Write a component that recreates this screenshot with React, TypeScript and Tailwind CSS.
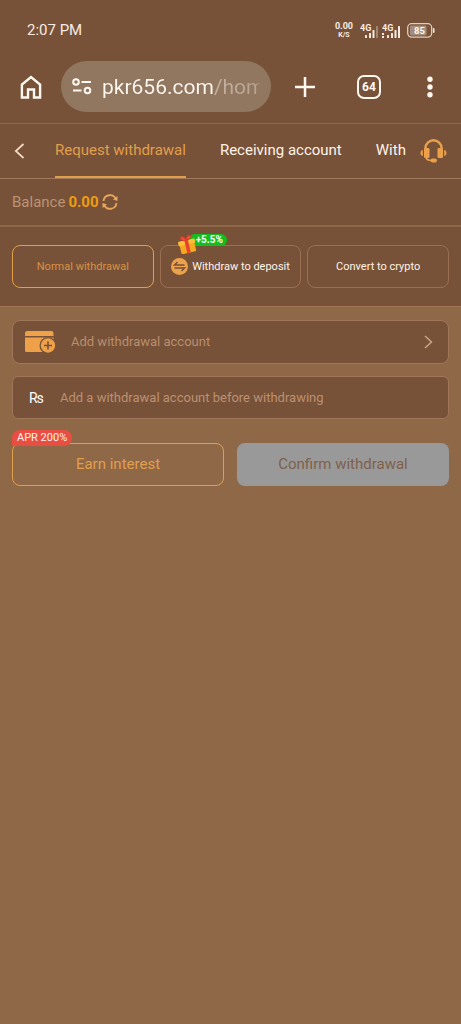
import React, { useState } from 'react';
import clsx from 'clsx';

const tabs = ['Request withdrawal', 'Receiving account', 'Withdrawal records'];

const SignalIcon: React.FC<{ roaming?: boolean }> = ({ roaming }) => (
  <svg width="19" height="16" viewBox="0 0 19 16" fill="#f7ebe1" aria-hidden="true">
    <text x="0" y="8" fontSize="9" fontWeight="700" fontFamily="Roboto, sans-serif">
      4G
    </text>
    {roaming && <path d="M0 10h2v2H0zM0 13h2v2H0z" />}
    <rect x="5" y="12" width="2" height="3" rx="0.5" />
    <rect x="9" y="10" width="2" height="5" rx="0.5" />
    <rect x="12.5" y="7" width="2" height="8" rx="0.5" />
    <rect x="16" y="3" width="2" height="12" rx="0.5" opacity={roaming ? 1 : 0.35} />
  </svg>
);

const StatusBar: React.FC = () => (
  <div className="flex h-[61px] items-center pl-[27px] pr-[26px] text-[#f7ebe1]">
    <span className="flex-1 text-[15px]">2:07 PM</span>
    <div className="flex items-center">
      <div className="mr-[7px] flex flex-col items-center font-bold">
        <span className="text-[9px] leading-[9px]">0.00</span>
        <span className="text-[7px] leading-[8px]">K/S</span>
      </div>
      <SignalIcon />
      <span className="w-[3px]" />
      <SignalIcon roaming />
      <svg className="ml-[6px]" width="28" height="15" viewBox="0 0 28 15" aria-hidden="true">
        <rect x="3" y="2.5" width="16.5" height="10" rx="1.5" fill="#a58d7c" />
        <rect x="0.7" y="0.7" width="24" height="13.4" rx="4" fill="none" stroke="#e2cdbd" strokeWidth="1.3" />
        <rect x="26" y="5" width="1.5" height="5" rx="0.7" fill="#f7ebe1" />
        <text
          x="12.5"
          y="11"
          fontSize="9.5"
          fontWeight="700"
          fontFamily="Roboto, sans-serif"
          textAnchor="middle"
          fill="#fff6ee"
        >
          85
        </text>
      </svg>
    </div>
  </div>
);

const BrowserBar: React.FC = () => {
  const [url, setUrl] = useState('pkr656.com/home');

  return (
    <div className="flex h-[63px] items-start border-b border-[#8e6a50] pl-5 pr-5 text-[#fff8f1]">
      <button type="button" aria-label="Home" className="flex h-[51px] w-[22px] items-center justify-center">
        <svg width="22" height="24" viewBox="0 0 22 24" fill="none" stroke="currentColor" strokeWidth="2.4">
          <path d="M1.900 22.500V9.500L11 2l9.100 7.500v13H14v-8H8v8z" />
        </svg>
      </button>

      {/* Address bar */}
      <div className="ml-[19px] flex h-[51px] min-w-0 flex-1 items-center rounded-full bg-[#917660] pl-[11px] pr-[10px]">
        <svg className="shrink-0" width="20" height="17" viewBox="0 0 20 17" fill="none" stroke="currentColor" strokeWidth="2" aria-hidden="true">
          <circle cx="4" cy="4" r="2.8" />
          <path d="M9.500 4H19" />
          <path d="M1 12.500h8.500" />
          <circle cx="15.5" cy="12.500" r="2.8" />
        </svg>
        <input
          type="text"
          aria-label="Address"
          value={url}
          onChange={(e) => setUrl(e.target.value)}
          className="ml-[10px] w-full min-w-0 bg-linear-[90deg,#fff8f1_112px,#c5b2a3_112px,#b8a391_154px,#917660] bg-clip-text text-[21px] leading-7 text-transparent caret-white outline-none"
        />
      </div>

      <button type="button" aria-label="New tab" className="ml-[23px] flex h-[51px] w-[22px] items-center justify-center">
        <svg width="22" height="22" viewBox="0 0 22 22" stroke="currentColor" strokeWidth="2.5">
          <path d="M1 11h20M11 1v20" />
        </svg>
      </button>
      <button type="button" aria-label="Open tabs" className="ml-[41px] flex h-[51px] w-6 items-center justify-center">
        <span className="flex h-6 w-6 items-center justify-center rounded-[7px] border-2 border-current text-xs font-bold">
          64
        </span>
      </button>
      <button type="button" aria-label="Menu" className="ml-[38px] flex h-[51px] w-[22px] items-center justify-center">
        <svg width="6" height="22" viewBox="0 0 6 22" fill="currentColor">
          <circle cx="3" cy="3.2" r="2.7" />
          <circle cx="3" cy="11" r="2.7" />
          <circle cx="3" cy="18.8" r="2.7" />
        </svg>
      </button>
    </div>
  );
};

const HeadsetIcon: React.FC = () => (
  <svg width="27" height="24" viewBox="0 0 27 24" fill="none" aria-hidden="true">
    <path d="M5.500 10V9a8 7.700 0 0 1 16 0v1" stroke="#eba04a" strokeWidth="2.4" />
    <rect x="4" y="9" width="5.5" height="10" rx="1.2" fill="#eba04a" />
    <rect x="17.5" y="9" width="5.5" height="10" rx="1.2" fill="#eba04a" />
    <path d="M2.800 11v6C1.200 16.800 .5 15.600 .5 14s.7-2.800 2.300-3zM24.200 11v6c1.600-.2 2.300-1.400 2.300-3s-.7-2.800-2.300-3z" fill="#eba04a" />
    <path d="M6 18.500c.5 2.300 2.500 3 5.500 3" stroke="#eba04a" strokeWidth="1.5" />
    <rect x="10.5" y="19.5" width="6.5" height="4" rx="2" fill="#eba04a" />
  </svg>
);

const GiftIcon: React.FC = () => (
  <svg width="20" height="20" viewBox="0 0 20 20" aria-hidden="true">
    <g transform="rotate(-13 10 10)">
      <rect x="2.5" y="9" width="15" height="10" rx="1" fill="#f7a823" />
      <rect x="1.5" y="6" width="17" height="4.5" rx="1" fill="#ffbd3b" />
      <rect x="8.2" y="6" width="3.6" height="13" fill="#e3452f" />
      <path d="M10 6C7 6 4.500 5 5 3s3.800-1.500 5 3zM10 6c3 0 5.500-1 5-3s-3.800-1.500-5 3z" fill="#f0533a" stroke="#dd3b28" strokeWidth="1" />
    </g>
  </svg>
);

const CardPlusIcon: React.FC = () => (
  <svg width="31" height="22" viewBox="0 0 31 22" aria-hidden="true">
    <path d="M0 5V2.500A2.300 2.300 0 0 1 2.300 0h24A2.300 2.300 0 0 1 28.500 2.500V5z" fill="#eea148" />
    <path d="M0 6.500h28.500v13a1.500 1.500 0 0 1-1.500 1.500H1.500A1.500 1.500 0 0 1 0 19.500z" fill="#eea148" />
    <circle cx="23" cy="14.5" r="8.5" fill="#775238" />
    <circle cx="23" cy="14.5" r="7.2" fill="#eea148" />
    <path d="M19 14.500h8M23 10.500v8" stroke="#775238" strokeWidth="1.6" />
  </svg>
);

const App: React.FC = () => {
  const [activeTab, setActiveTab] = useState(tabs[0]);
  const [amount, setAmount] = useState('');

  return (
    <div className="min-h-screen bg-[#8f6848] font-[Roboto,sans-serif]">
      <header className="bg-[#775238]">
        <StatusBar />
        <BrowserBar />

        {/* Tabs */}
        <div className="flex h-[55px] items-stretch border-b border-[#a17a5e] px-[14px]">
          <button type="button" aria-label="Back" className="flex w-[11px] items-center">
            <svg width="11" height="16" viewBox="0 0 11 16" fill="none" stroke="#f1d9c5" strokeWidth="1.7">
              <path d="M9.500 1L1.800 8l7.700 7" />
            </svg>
          </button>
          <nav className="ml-[30px] flex min-w-0 flex-1 gap-[34px] overflow-hidden">
            {tabs.map((tab) => (
              <button
                key={tab}
                type="button"
                onClick={() => setActiveTab(tab)}
                className={clsx(
                  'shrink-0 whitespace-nowrap border-b-2 text-[15px]',
                  activeTab === tab ? 'border-[#e29f4b] text-[#e29f4b]' : 'border-transparent text-[#fff3e8]'
                )}
              >
                {tab}
              </button>
            ))}
          </nav>
          <button type="button" aria-label="Support" className="ml-[14px] flex items-center">
            <HeadsetIcon />
          </button>
        </div>

        {/* Balance */}
        <div className="flex h-12 items-center border-b-2 border-[#8f6848] px-3 text-[15px] text-[#bc9274]">
          <span>Balance</span>
          <span className="ml-[3px] font-bold text-[#f09c12]">0.00</span>
          <button type="button" aria-label="Refresh balance" className="ml-[3px]">
            <svg width="16" height="16" viewBox="0 0 16 16" fill="none" stroke="#e9a65c" strokeWidth="1.8">
              <path d="M1.500 7A6.500 6.500 0 0 1 14 5.300M14.500 9A6.500 6.500 0 0 1 2 10.700" />
              <path d="M15.500 2v5l-4.500-1.500zM.5 14V9L5 10.500z" fill="#e9a65c" stroke="none" />
            </svg>
          </button>
        </div>

        {/* Withdrawal type */}
        <div className="grid grid-cols-3 gap-[6px] border-b border-[#a17553] px-3 py-[18px] text-[11px] leading-4">
          <button type="button" className="h-[43px] rounded-lg border border-[#e29f4b] text-[#d89145]">
            Normal withdrawal
          </button>
          <button
            type="button"
            className="relative flex h-[43px] items-center justify-center gap-1 rounded-lg border border-[#9a6f52] text-[#fff3e8]"
          >
            <svg width="17" height="17" viewBox="0 0 17 17" className="shrink-0" aria-hidden="true">
              <circle cx="8.5" cy="8.5" r="8.5" fill="#eca24c" />
              <path d="M13.500 7H3.500L6.500 4M3.500 10h10l-3 3" fill="none" stroke="#775238" strokeWidth="1.5" />
            </svg>
            <span className="whitespace-nowrap">Withdraw to deposit</span>
            <span className="absolute -top-3 left-7 flex h-3 items-center rounded-full rounded-bl-none bg-[#14bd1b] pl-[7px] pr-1 text-[10px] font-bold leading-3 text-white">
              +5.5%
            </span>
            <span className="absolute -top-3 left-4">
              <GiftIcon />
            </span>
          </button>
          <button type="button" className="h-[43px] rounded-lg border border-[#9a6f52] text-[#fff3e8]">
            Convert to crypto
          </button>
        </div>
      </header>

      <main className="px-3 pt-[13px]">
        <button
          type="button"
          className="flex h-11 w-full items-center rounded-lg border border-[#a0765a] bg-[#775238] pl-3 pr-[15px] text-[13px] text-[#b98e70]"
        >
          <CardPlusIcon />
          <span className="ml-[15px] flex-1 text-left">Add withdrawal account</span>
          <svg width="9" height="14" viewBox="0 0 9 14" fill="none" stroke="#cda486" strokeWidth="1.5" aria-hidden="true">
            <path d="M1 1l6.500 6L1 13" />
          </svg>
        </button>

        <div className="mt-3 flex h-[43px] items-center rounded-md border border-[#a0765a] bg-[#775238] px-4">
          <label htmlFor="amount" className="w-4 text-sm text-white">
            ₨
          </label>
          <input
            id="amount"
            type="text"
            value={amount}
            onChange={(e) => setAmount(e.target.value)}
            placeholder="Add a withdrawal account before withdrawing"
            className="ml-[15px] min-w-0 flex-1 bg-transparent text-[13px] text-white outline-none placeholder:text-[#bd9071]"
          />
        </div>

        {/* Actions */}
        <div className="mt-6 grid grid-cols-2 gap-[13px] text-[15px]">
          <div className="relative">
            <button type="button" className="h-[43px] w-full rounded-lg border border-[#e29f4b] text-[#e29f4b]">
              Earn interest
            </button>
            <span className="absolute left-0 -top-[13px] flex h-4 items-center rounded-lg rounded-bl-none bg-[#e94e42] px-[5px] text-[11px] text-[#fff3e8]">
              APR 200%
            </span>
          </div>
          <button type="button" disabled className="h-[43px] rounded-lg bg-[#999999] text-[#80604c]">
            Confirm withdrawal
          </button>
        </div>
      </main>
    </div>
  );
};

export default App;
